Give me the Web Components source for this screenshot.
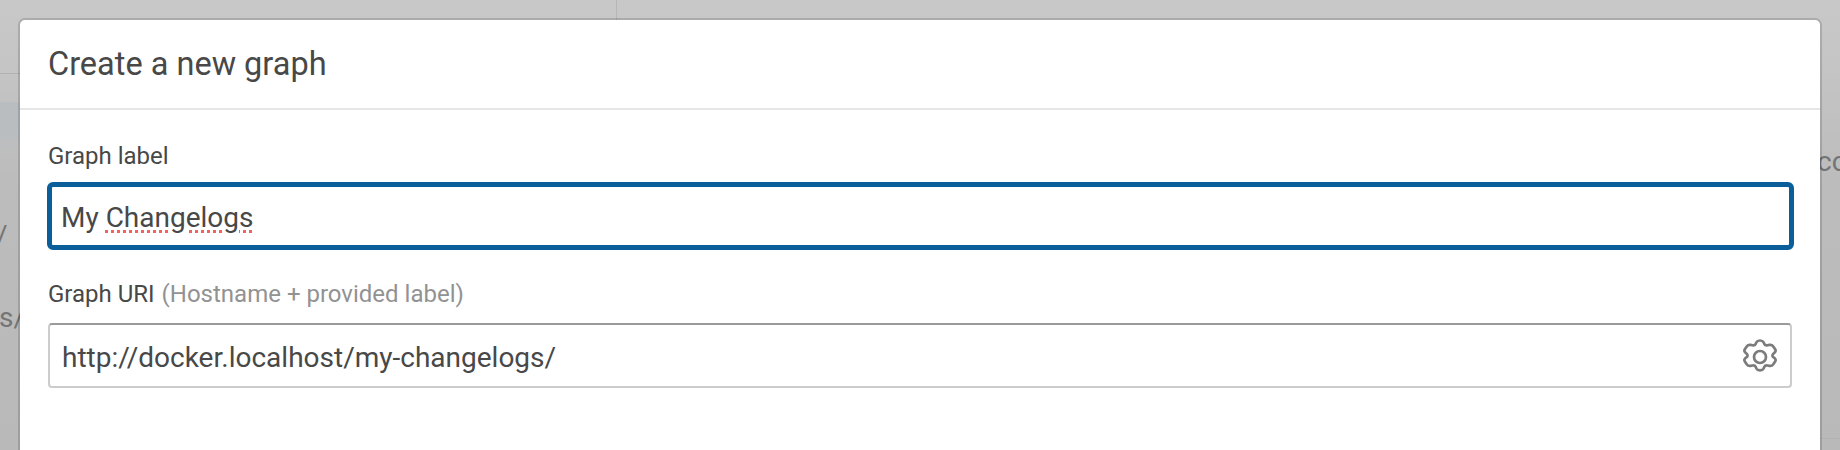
<!doctype html>
<html><head><meta charset="utf-8"><style>
html,body{margin:0;height:450px;overflow:hidden;font-family:Roboto,"Liberation Sans",sans-serif}
</style></head><body>
<template id="t-backdrop"><style>
:host{display:block;position:relative;width:1840px;height:450px;overflow:hidden;background:linear-gradient(180deg,#c8c8c8 0,#c5c5c5 60px,#bcbcbc 180px,#b9b9b9 100%);box-sizing:border-box;padding:20px 20px 0}
.bg{position:absolute;color:#757575;font-size:28px;line-height:32px}
.vl{position:absolute;left:616px;top:0;width:1px;height:20px;background:#b6b6b6}
.hl{position:absolute;background:#b2b2b2;height:1px}
.tint{position:absolute;left:0;top:102px;width:20px;height:50px;background:linear-gradient(#b9bdc0,#b9bdc0 60%,transparent)}
</style>
<div class="tint"></div>
<div class="vl"></div>
<div class="hl" style="left:0;width:20px;top:73px"></div>
<div class="hl" style="left:1820px;width:20px;top:438px"></div>
<div class="bg" style="left:-4px;top:220px">/</div>
<div class="bg" style="left:-1px;top:302px">s/</div>
<div class="bg" style="left:1817px;top:146px">cc</div>
<slot></slot></template>

<template id="t-dialog"><style>
:host{display:block;position:relative;background:#fff;border-radius:5px 5px 0 0;height:430px;box-sizing:border-box;box-shadow:0 0 0 2px rgba(0,0,0,.14)}
header{box-sizing:border-box;border-bottom:2px solid #e6e6e6;padding:0 28px;height:90px;display:flex;align-items:center}
h1{margin:0;font:400 32.5px/38px Roboto,sans-serif;color:#484848}
.body{padding:31px 28px 0;display:flex;flex-direction:column}
</style><header><h1><slot name="title"></slot></h1></header><div class="body"><slot></slot></div></template>

<template id="t-field"><style>
:host{display:block;margin-bottom:30px}
label{display:block;font:400 24px/30px Roboto,sans-serif;color:#484848;margin-bottom:14px}
.hint{color:#929292;margin-left:7px}
.box{box-sizing:border-box;display:flex;align-items:center;background:#fff;font:400 28px/34px Roboto,sans-serif;color:#484848;width:1744px;height:65px;border-radius:4px;border:2px solid #cccccc;border-top-color:#9a9a9a;padding:4px 12px 0 12px}
:host([focused]) .box{height:68px;width:1747px;margin:-3px 0 -1px -1px;border:5.5px solid #0a5f9a;border-radius:6px;padding-left:9px}
.val{flex:1;white-space:pre}
</style><label><slot name="label"></slot><span class="hint"><slot name="hint"></slot></span></label>
<div class="box"><span class="val"><slot></slot></span><slot name="icon"></slot></div></template>

<template id="t-squiggle"><style>
:host{display:inline;text-decoration:underline dotted #f4625e 3px;text-underline-offset:3px}
</style><slot></slot></template>

<template id="t-gear"><style>
:host{display:inline-flex;margin-top:-1px}
svg{display:block;width:36px;height:36px;fill:none;stroke:#7c7c7c;stroke-width:1.35;stroke-linecap:round;stroke-linejoin:round}
</style><svg viewBox="3 3 18 18"><path d="M10.4 4.3c.3-.7 1-.9 1.6-.9s1.3.2 1.6.9l.3.8c.2.5.8.8 1.4.7l.9-.2c.7-.1 1.3.2 1.6.7l.9 1.5c.3.5.2 1.2-.3 1.7l-.6.6c-.4.4-.4 1.1 0 1.5l.6.6c.5.5.6 1.2.3 1.7l-.9 1.5c-.3.5-.9.8-1.6.7l-.9-.2c-.6-.1-1.2.2-1.4.7l-.3.8c-.3.7-1 .9-1.6.9s-1.3-.2-1.6-.9l-.3-.8c-.2-.5-.8-.8-1.4-.7l-.9.2c-.7.1-1.3-.2-1.6-.7l-.9-1.5c-.3-.5-.2-1.2.3-1.7l.6-.6c.4-.4.4-1.1 0-1.5l-.6-.6c-.5-.5-.6-1.2-.3-1.7l.9-1.5c.3-.5.9-.8 1.6-.7l.9.2c.6.1 1.2-.2 1.4-.7z" transform="translate(-1.56 .35) scale(1.13 1)" vector-effect="non-scaling-stroke" style="stroke-width:2.7px"/><circle cx="12" cy="12" r="3"/></svg></template>

<x-backdrop>
<x-dialog>
<span slot="title">Create a new graph</span>
<x-field focused><span slot="label">Graph label</span>My <x-squiggle>Changelogs</x-squiggle></x-field>
<x-field><span slot="label">Graph URI</span><span slot="hint">(Hostname + provided label)</span>http://docker.localhost/my-changelogs/<x-gear slot="icon"></x-gear></x-field>
</x-dialog>
</x-backdrop>
<script>
for (const n of ['backdrop','dialog','field','gear','squiggle']) {
  customElements.define('x-'+n, class extends HTMLElement {
    constructor(){super();this.attachShadow({mode:'open'}).appendChild(document.getElementById('t-'+n).content.cloneNode(true));}
  });
}
</script>
</body></html>
